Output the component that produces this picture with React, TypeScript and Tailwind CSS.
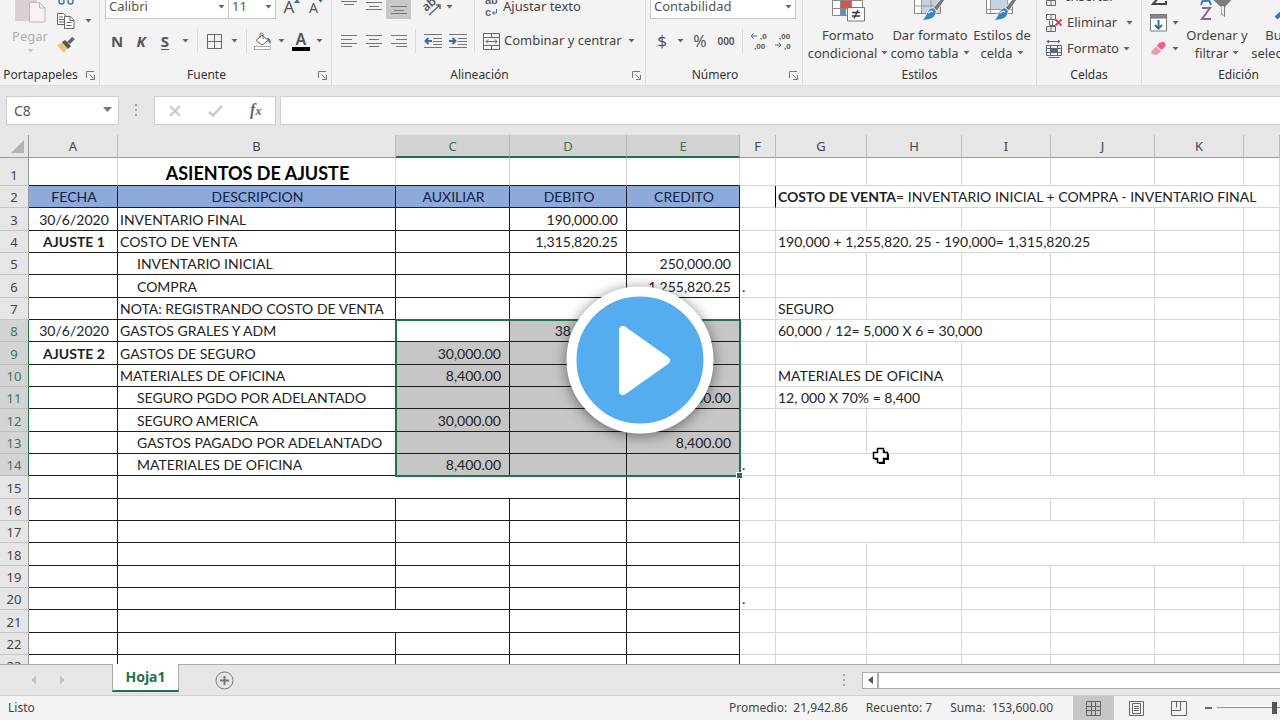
import type { ReactNode } from 'react';
import clsx from 'clsx';

type Cell = {
  text?: ReactNode;
  span?: number;
  className?: string;
};

const COLUMNS = [
  { id: 'A', width: 'w-[89px]' },
  { id: 'B', width: 'w-[278px]' },
  { id: 'C', width: 'w-[114px]' },
  { id: 'D', width: 'w-[117px]' },
  { id: 'E', width: 'w-[113px]' },
  { id: 'F', width: 'w-[36px]' },
  { id: 'G', width: 'w-[91px]' },
  { id: 'H', width: 'w-[95px]' },
  { id: 'I', width: 'w-[89px]' },
  { id: 'J', width: 'w-[104px]' },
  { id: 'K', width: 'w-[89px]' },
  { id: 'L', width: '' },
];

const ROWS = Array.from({ length: 23 }, (_, i) => i + 1);

const heading = 'text-center bg-[#8ea9db] text-[#14213f]';
const amount = 'text-right pr-2';
const indent = 'pl-[19px]';

const CELLS: Record<string, Cell> = {
  B1: { text: 'ASIENTOS DE AJUSTE', className: 'text-center font-bold text-lg leading-6 text-black' },
  A2: { text: 'FECHA', className: heading },
  B2: { text: 'DESCRIPCION', className: heading },
  C2: { text: 'AUXILIAR', className: heading },
  D2: { text: 'DEBITO', className: heading },
  E2: { text: 'CREDITO', className: heading },
  F2: { className: 'border-r-black' },
  G2: { text: <><b>COSTO DE VENTA</b>= INVENTARIO INICIAL + COMPRA - INVENTARIO FINAL</>, span: 6 },
  A3: { text: '30/6/2020', className: 'text-center' },
  B3: { text: 'INVENTARIO FINAL' },
  D3: { text: '190,000.00', className: amount },
  A4: { text: 'AJUSTE 1', className: 'text-center font-bold' },
  B4: { text: 'COSTO DE VENTA' },
  D4: { text: '1,315,820.25', className: amount },
  G4: { text: '190,000 + 1,255,820. 25 - 190,000= 1,315,820.25', span: 4 },
  B5: { text: 'INVENTARIO INICIAL', className: indent },
  E5: { text: '250,000.00', className: amount },
  B6: { text: 'COMPRA', className: indent },
  E6: { text: '1,255,820.25', className: amount },
  F6: { text: '.' },
  B7: { text: 'NOTA: REGISTRANDO COSTO DE VENTA' },
  G7: { text: 'SEGURO' },
  A8: { text: '30/6/2020', className: 'text-center' },
  B8: { text: 'GASTOS GRALES Y ADM' },
  D8: { text: '38,400.00', className: amount },
  G8: { text: '60,000 / 12= 5,000 X 6 = 30,000', span: 3 },
  A9: { text: 'AJUSTE 2', className: 'text-center font-bold' },
  B9: { text: 'GASTOS DE SEGURO' },
  C9: { text: '30,000.00', className: amount },
  B10: { text: 'MATERIALES DE OFICINA' },
  C10: { text: '8,400.00', className: amount },
  G10: { text: 'MATERIALES DE OFICINA', span: 2 },
  B11: { text: 'SEGURO PGDO POR ADELANTADO', className: indent },
  E11: { text: '30,000.00', className: amount },
  G11: { text: '12, 000 X 70% = 8,400', span: 2 },
  B12: { text: 'SEGURO AMERICA', className: indent },
  C12: { text: '30,000.00', className: amount },
  B13: { text: 'GASTOS PAGADO POR ADELANTADO', className: indent },
  E13: { text: '8,400.00', className: amount },
  B14: { text: 'MATERIALES DE OFICINA', className: indent },
  C14: { text: '8,400.00', className: amount },
  F14: { text: '.' },
  G14: { span: 2 },
  B15: { span: 3 },
  G15: { span: 2 },
  I15: { span: 4 },
  G16: { span: 2 },
  G17: { span: 2 },
  I17: { span: 2 },
  I18: { span: 4 },
  F20: { text: '.' },
  B21: { span: 2 },
};

const isSelectedColumn = (id: string) => 'CDE'.includes(id);
const isSelectedRow = (row: number) => row >= 8 && row <= 14;

/* ---------- small ribbon pieces ---------- */

function Caret({ className = 'text-[#666]' }: { className?: string }) {
  return (
    <svg width="7" height="4" viewBox="0 0 7 4" className={clsx('shrink-0', className)} fill="currentColor">
      <path d="M0.5 0h6L3.5 3.6z" />
    </svg>
  );
}

function CaretButton({ label, className = 'w-4' }: { label: string; className?: string }) {
  return (
    <button aria-label={label} className={clsx('flex h-6 shrink-0 items-center justify-center', className)}>
      <Caret />
    </button>
  );
}

function IconButton({ label, className = 'w-6', children }: { label: string; className?: string; children: ReactNode }) {
  return (
    <button aria-label={label} className={clsx('flex h-6 shrink-0 items-center justify-center text-[#555]', className)}>
      {children}
    </button>
  );
}

function Divider() {
  return <div className="mx-1 h-6 w-px shrink-0 bg-[#dadada]" />;
}

function Group({ label, launcher, className, children }: { label: string; launcher?: boolean; className: string; children: ReactNode }) {
  return (
    <section className={clsx('flex h-full shrink-0 flex-col justify-end border-r border-[#dadada]', className)}>
      {children}
      <div className="flex h-5 shrink-0 items-center">
        <span className="flex-1 text-center text-xs text-[#333]">{label}</span>
        {launcher && (
          <button aria-label={`Más opciones de ${label}`} className="flex w-[18px] items-center justify-center">
            <svg width="9" height="9" viewBox="0 0 9 9" fill="none" stroke="#777">
              <path d="M0.5 7V0.5H8" />
              <path d="M3.5 3.5L7.5 7.5M8.5 4v4.5H4" />
            </svg>
          </button>
        )}
      </div>
    </section>
  );
}

function BigButton({ icon, lines, className }: { icon: ReactNode; lines: [string, string]; className: string }) {
  return (
    <button className={clsx('flex shrink-0 flex-col items-center whitespace-nowrap leading-[18px] text-[#444]', className)}>
      <span className="mb-1">{icon}</span>
      <span>{lines[0]}</span>
      <span className="flex items-center gap-1">
        {lines[1]}
        <Caret />
      </span>
    </button>
  );
}

function Combo({ label, value, className }: { label: string; value: string; className: string }) {
  return (
    <div className={clsx('relative h-6 shrink-0', className)}>
      <select
        aria-label={label}
        defaultValue={value}
        className="h-full w-full appearance-none border border-[#c6c6c6] bg-white pl-[3px] text-[13px] text-[#555]"
      >
        <option>{value}</option>
      </select>
      <span className="pointer-events-none absolute right-1 top-1/2 -translate-y-1/2">
        <Caret />
      </span>
    </div>
  );
}

function Lines({ d }: { d: string }) {
  return (
    <svg width="16" height="14" viewBox="0 0 16 14" fill="none" stroke="#777">
      <path d={d} />
    </svg>
  );
}

const ALIGN_LEFT = 'M0 1.5h16M0 5.5h11M0 9.5h16M0 12.5h11';
const ALIGN_CENTER = 'M0 1.5h16M3 5.5h10M0 9.5h16M3 12.5h10';
const ALIGN_RIGHT = 'M0 1.5h16M5 5.5h11M0 9.5h16M5 12.5h11';

function IndentIcon({ arrow }: { arrow: string }) {
  return (
    <svg width="18" height="16" viewBox="0 0 18 16" fill="none" stroke="#777">
      <path d="M0 1.5h18M9 5.5h9M9 8.5h9M9 11.5h9M0 14.5h18" />
      <path d={arrow} stroke="#3b6ea5" strokeWidth="2" />
    </svg>
  );
}

function StyleBrushIcon({ grid }: { grid?: boolean }) {
  return (
    <svg width="34" height="32" viewBox="0 0 34 32" fill="none">
      <path d="M1.5 1.5h26v22h-26z" fill="#fff" stroke="#888" />
      <path d={grid ? 'M8 8h19v15H8z' : 'M6 6h16v13H6z'} fill="#c3d3e0" />
      <path d={grid ? 'M1.5 8.5h26M1.5 16h26M8.5 1.5v22M18 1.5v22' : 'M1.5 19.5h26M5.5 1.5v22M22.5 1.5v22'} stroke="#999" />
      <path d="M31 5l2.5 2.5L24 21l-4-3z" fill="#777" stroke="#f3f3f3" />
      <path d="M18 18c3-1 6 2 5 5-1 5-7 8-14 7 4-2 4-9 9-12z" fill="#3f80bd" stroke="#f3f3f3" />
      <path d="M15 23c2-2 4-2 5-1" stroke="#cfe3f4" strokeWidth="1.5" />
    </svg>
  );
}

function Ribbon() {
  return (
    <header className="flex h-[86px] shrink-0 overflow-hidden border-b border-[#dcdcdc] bg-[#f3f3f3] text-[13px]">
      <Group label="Portapapeles" launcher className="w-[100px]">
        <div className="mb-2 flex items-end">
          <button className="flex w-[60px] flex-col items-center text-[#b5adb1]">
            <svg width="32" height="34" viewBox="0 0 32 34" fill="none">
              <path d="M1 2h22v30H1z" fill="#dccfd3" />
              <path d="M15.5 13.5h10l5.5 5.5v14h-15.5z" fill="#f8f2f5" stroke="#c2b6bc" />
              <path d="M25.5 13.5v5.5h5.5" stroke="#c2b6bc" />
            </svg>
            <span className="mt-1 leading-[18px]">Pegar</span>
            <Caret className="my-1 text-[#c8c8c8]" />
          </button>
          <div className="flex flex-col">
            <IconButton label="Cortar" className="w-3">
              <svg width="18" height="18" viewBox="0 0 18 18" fill="none" stroke="#55779a" strokeWidth="1.5" className="shrink-0">
                <path d="M5 0l6 11M13 0L7 11" stroke="#777" />
                <circle cx="4.5" cy="13.5" r="2.5" />
                <circle cx="13.5" cy="13.5" r="2.5" />
              </svg>
            </IconButton>
            <div className="flex">
              <IconButton label="Copiar" className="w-3">
                <svg width="18" height="16" viewBox="0 0 18 16" fill="#fff" stroke="#666" className="shrink-0">
                  <path d="M0.5 0.5h6l3 3v8h-9z" />
                  <path d="M2 4h4M2 6.5h5M2 9h5" />
                  <path d="M7.5 3.5h6l3.5 3.5v8.5h-9.5z" />
                  <path d="M13 3.5v4h4M9.5 9.5h5M9.5 12.5h5" />
                </svg>
              </IconButton>
              <CaretButton label="Opciones de copiar" className="ml-2 w-4" />
            </div>
            <IconButton label="Copiar formato" className="w-3">
              <svg width="18" height="16" viewBox="0 0 18 16" className="shrink-0">
                <path d="M0 8l6-3 5 5-4 6z" fill="#ecc27f" />
                <path d="M5 5l3-2 6 6-3 3z" fill="#555" />
                <path d="M10 5l5-5 3 2-5 5z" fill="#666" />
              </svg>
            </IconButton>
          </div>
        </div>
      </Group>

      <Group label="Fuente" launcher className="w-[232px]">
        <div className="mb-3 flex flex-col gap-[10px] pl-[5px]">
          <div className="flex">
            <Combo label="Fuente" value="Calibri" className="w-[124px]" />
            <Combo label="Tamaño de fuente" value="11" className="-ml-px w-12" />
            <IconButton label="Aumentar tamaño" className="ml-1 w-6">
              <span className="text-[17px]">A</span>
              <svg width="6" height="4" viewBox="0 0 6 4" className="mb-3" fill="#3b6ea5"><path d="M0 4l3-4 3 4z" /></svg>
            </IconButton>
            <IconButton label="Disminuir tamaño" className="w-6">
              <span className="text-[14px]">A</span>
              <svg width="5" height="4" viewBox="0 0 6 4" className="mb-3" fill="#3b6ea5"><path d="M0 0h6L3 4z" /></svg>
            </IconButton>
          </div>
          <div className="flex text-[15px]">
            <IconButton label="Negrita"><b>N</b></IconButton>
            <IconButton label="Cursiva"><b className="italic">K</b></IconButton>
            <IconButton label="Subrayado"><b className="underline underline-offset-2">S</b></IconButton>
            <CaretButton label="Opciones de subrayado" />
            <Divider />
            <IconButton label="Bordes">
              <svg width="15" height="15" viewBox="0 0 15 15" fill="none" stroke="#666">
                <path d="M0.5 0.5h14v14h-14zM7.5 0.5v14M0.5 7.5h14" />
              </svg>
            </IconButton>
            <CaretButton label="Opciones de bordes" />
            <Divider />
            <IconButton label="Color de relleno">
              <svg width="20" height="18" viewBox="0 0 20 18" fill="none" stroke="#666">
                <path d="M3 8.5l6-5.5 6 5.5-6 4.500z" fill="#fff" />
                <path d="M7 6V2.5a1.5 1.5 0 0 1 3 0V7" />
                <path d="M14 6c3 0 4 2 3.5 6-1.5-1-2-3-2.5-4z" fill="#3b6ea5" stroke="none" />
                <path d="M1.5 14.5h16v3h-16z" fill="#fff" stroke="#aaa" />
              </svg>
            </IconButton>
            <CaretButton label="Opciones de relleno" className="w-3" />
            <IconButton label="Color de fuente" className="w-7">
              <span className="flex w-[18px] justify-center border-b-4 border-black text-base font-semibold leading-4">A</span>
            </IconButton>
            <CaretButton label="Opciones de color de fuente" className="w-2" />
          </div>
        </div>
      </Group>

      <Group label="Alineación" launcher className="w-[314px]">
        <div className="mb-3 flex pl-1">
          <div className="flex flex-col gap-[10px]">
            <div className="flex">
              <IconButton label="Alinear arriba" className="w-[25px]"><Lines d="M0 1.5h16M3 4.5h10" /></IconButton>
              <IconButton label="Alinear al medio" className="w-[25px]"><Lines d="M0 2.5h16M3 6.5h10M0 9.5h16" /></IconButton>
              <IconButton label="Alinear abajo" className="w-[25px] bg-[#c8c8c8]"><Lines d="M0 6.5h16M3 10.5h10M0 13.5h16" /></IconButton>
              <div className="w-[9px]" />
              <IconButton label="Orientación" className="w-[25px]">
                <svg width="20" height="20" viewBox="0 0 20 20" fill="none" stroke="#666">
                  <text x="0" y="11" fontSize="12" fontWeight="600" fill="#555" stroke="none" transform="rotate(-40 7 9)">ab</text>
                  <path d="M6 18L17 8M17 12V8h-4" strokeWidth="1.5" />
                </svg>
              </IconButton>
              <CaretButton label="Opciones de orientación" className="w-2" />
            </div>
            <div className="flex">
              <IconButton label="Alinear a la izquierda" className="w-[25px]"><Lines d={ALIGN_LEFT} /></IconButton>
              <IconButton label="Centrar" className="w-[25px]"><Lines d={ALIGN_CENTER} /></IconButton>
              <IconButton label="Alinear a la derecha" className="w-[25px]"><Lines d={ALIGN_RIGHT} /></IconButton>
              <Divider />
              <IconButton label="Disminuir sangría" className="w-[25px]"><IndentIcon arrow="M1 8h7M4.5 5L1.5 8l3 3" /></IconButton>
              <IconButton label="Aumentar sangría" className="w-[25px]"><IndentIcon arrow="M0 8h7M3.5 5l3 3-3 3" /></IconButton>
            </div>
          </div>
          <div className="mx-1 w-px bg-[#dadada]" />
          <div className="flex flex-col gap-[10px] pl-1">
            <button className="flex h-6 items-center gap-1 text-[#444]">
              <svg width="16" height="20" viewBox="0 0 16 20" className="font-['Liberation_Sans',sans-serif] text-[11px]" fill="none" stroke="#3b6ea5">
                <text x="2" y="7" fontWeight="700" fill="#666" stroke="none">ab</text>
                <text x="2" y="19" fontWeight="700" fill="#666" stroke="none">c</text>
                <path d="M13.5 12v4H9.5M11.5 14l-2 2 2 2" />
              </svg>
              Ajustar texto
            </button>
            <button className="flex h-6 items-center gap-1 whitespace-nowrap text-[#444]">
              <svg width="17" height="17" viewBox="0 0 17 17" fill="none" stroke="#666" className="shrink-0">
                <path d="M0.5 0.5h16v16h-16zM0.5 4.5h16M0.5 12.5h16M8.5 0.5v4M8.5 12.5v4" />
                <path d="M3 8.5h11M5 6.5l-2 2 2 2M12 6.5l2 2-2 2" stroke="#3b6ea5" />
              </svg>
              Combinar y centrar
              <span className="ml-0.5"><Caret /></span>
            </button>
          </div>
        </div>
      </Group>

      <Group label="Número" launcher className="w-[157px]">
        <div className="mb-3 flex flex-col gap-[10px] pl-1">
          <Combo label="Formato de número" value="Contabilidad" className="w-[146px]" />
          <div className="flex">
            <IconButton label="Formato de moneda"><span className="text-[17px]">$</span></IconButton>
            <CaretButton label="Opciones de moneda" className="w-3" />
            <IconButton label="Porcentaje" className="w-7"><span className="text-base">%</span></IconButton>
            <IconButton label="Millares" className="w-6"><span className="text-[10px] font-semibold">000</span></IconButton>
            <Divider />
            <IconButton label="Aumentar decimales" className="w-6">
              <svg width="18" height="18" viewBox="0 0 18 18" className="font-['Liberation_Sans',sans-serif] text-[8px] font-bold" fill="#555">
                <text x="10" y="7">,0</text>
                <text x="4" y="17">,00</text>
                <path d="M1 4h6M3.5 1.5L1 4l2.5 2.500" fill="none" stroke="#3b6ea5" />
              </svg>
            </IconButton>
            <IconButton label="Disminuir decimales" className="w-6">
              <svg width="18" height="18" viewBox="0 0 18 18" className="font-['Liberation_Sans',sans-serif] text-[8px] font-bold" fill="#555">
                <text x="5" y="7">,00</text>
                <text x="10" y="17">,0</text>
                <path d="M1 13h6M4.5 10.5L7 13l-2.5 2.500" fill="none" stroke="#3b6ea5" />
              </svg>
            </IconButton>
          </div>
        </div>
      </Group>

      <Group label="Estilos" className="w-[234px]">
        <div className="mb-[3px] flex items-end pl-[3px]">
          <BigButton
            className="w-[84px]"
            lines={['Formato', 'condicional']}
            icon={
              <svg width="34" height="32" viewBox="0 0 34 32" fill="none">
                <path d="M1.5 0.5h30v25h-30z" fill="#fff" stroke="#888" />
                <path d="M10 0h8v10h-8z" fill="#5b8fc4" />
                <path d="M10 11h10v7H10z" fill="#d9534a" />
                <path d="M10 19h5v6h-5z" fill="#5b8fc4" />
                <path d="M1.5 10.5h30M1.5 18.5h30M9.5 0.5v25M20.5 0.5v25" stroke="#888" />
                <path d="M16.5 17.5h17v13.5h-17z" fill="#fff" stroke="#777" />
                <path d="M21 22.5h8M21 26h8M27 20l-4 8.5" stroke="#333" strokeWidth="1.3" />
              </svg>
            }
          />
          <BigButton className="w-20" lines={['Dar formato', 'como tabla']} icon={<StyleBrushIcon grid />} />
          <BigButton className="w-16" lines={['Estilos de', 'celda']} icon={<StyleBrushIcon />} />
        </div>
      </Group>

      <Group label="Celdas" className="w-[105px]">
        <div className="mb-[3px] flex flex-col pl-2 text-[#444]">
          <button className="flex h-[26px] items-center gap-1">
            <svg width="17" height="17" viewBox="0 0 17 17" fill="none" stroke="#666">
              <path d="M1.5 0.5h9v5h-9zM6 0.5v5M1.5 11.5h9v5h-9zM6 11.5v5" />
            </svg>
            Insertar
            <span className="ml-auto mr-2"><Caret /></span>
          </button>
          <button className="flex h-[26px] items-center gap-1">
            <svg width="18" height="18" viewBox="0 0 18 18" fill="none" stroke="#666">
              <path d="M1.5 0.5h9v5h-9zM6 0.5v5M1.5 12.5h9v5h-9zM6 12.5v5M4.5 6.5v5h6M7.5 6.5v5" />
              <path d="M10.5 5.5l6 6M16.5 5.5l-6 6" stroke="#d9415c" strokeWidth="2" />
            </svg>
            Eliminar
            <span className="ml-auto mr-2"><Caret /></span>
          </button>
          <button className="flex h-[26px] items-center gap-1">
            <svg width="18" height="18" viewBox="0 0 18 18" fill="none" stroke="#666">
              <path d="M2 1.5h13M4 0L2 1.5 4 3M13 0l2 1.5L13 3" stroke="#3b6ea5" />
              <path d="M1.5 5.5h15v10h-15zM5.5 5.5v10M12.5 5.5v10M1.5 8.5h15M1.5 12.5h15M3.5 17.5h11" />
              <path d="M6 9h6v3H6z" fill="#3b6ea5" stroke="none" />
            </svg>
            Formato
            <Caret />
          </button>
        </div>
      </Group>

      <Group label="Edición" className="w-[194px]">
        <div className="mb-[3px] flex items-end pl-2">
          <div className="flex w-[38px] flex-col">
            <button aria-label="Autosuma" className="flex h-[26px] items-center">
              <svg width="18" height="18" viewBox="0 0 18 18" fill="none" stroke="#444" strokeWidth="2">
                <path d="M16 4V2H3l6 7-6 7h13v-3" />
              </svg>
            </button>
            <button aria-label="Rellenar" className="flex h-[26px] items-center justify-between">
              <svg width="17" height="18" viewBox="0 0 17 18" fill="#fff" stroke="#777">
                <path d="M0.5 0.5h16v16.5h-16z" />
                <path d="M0.5 0.5h16v3.5h-16z" fill="#888" />
                <path d="M8.5 6v8M5 11l3.5 3.5L12 11" fill="none" stroke="#3b6ea5" strokeWidth="2" />
              </svg>
              <span className="mr-2"><Caret /></span>
            </button>
            <button aria-label="Borrar" className="flex h-[26px] items-center justify-between">
              <svg width="17" height="16" viewBox="0 0 17 16">
                <path d="M9 2l5-1.5 2 4L12 9 7 5z" fill="#e8647c" />
                <path d="M6 5.5l5 4.5-4 4-5.5-1v-3z" fill="#f09aaa" />
              </svg>
              <span className="mr-2"><Caret /></span>
            </button>
          </div>
          <BigButton
            className="w-[60px]"
            lines={['Ordenar y', 'filtrar']}
            icon={
              <svg width="34" height="32" viewBox="0 0 34 32" fill="none">
                <path d="M1 15L6 2l5 13M3 11h6" stroke="#3f80bd" strokeWidth="2" />
                <path d="M2 18h8L2 29h9" stroke="#8a62ad" strokeWidth="2" />
                <path d="M11 8h22l-8 9v10l-4-3v-7z" fill="#7b7b7b" />
                <path d="M21.5 16v7l2.5 3v-10z" fill="#eee" />
              </svg>
            }
          />
          <BigButton
            className="w-[88px]"
            lines={['Buscar y', 'seleccionar']}
            icon={
              <svg width="34" height="32" viewBox="0 0 34 32" fill="none" stroke="#3f6fc0">
                <circle cx="20" cy="11" r="9" strokeWidth="2" />
                <path d="M13 18L2 28" strokeWidth="4" />
              </svg>
            }
          />
        </div>
      </Group>
    </header>
  );
}

function Dots() {
  return (
    <svg width="3" height="13" viewBox="0 0 3 13" fill="#a6a6a6" className="shrink-0">
      <path d="M0 0h2v2H0zM0 5h2v2H0zM0 10h2v2H0z" />
    </svg>
  );
}

function FormulaBar() {
  return (
    <div className="flex shrink-0 items-center bg-[#e6e6e6] py-[10px] pl-1.5">
      <div className="relative h-[29px] w-[113px] shrink-0">
        <input aria-label="Cuadro de nombres" defaultValue="C8" className="h-full w-full border border-[#cfcfcf] bg-white pl-[7px] text-sm text-[#555]" />
        <svg width="9" height="5" viewBox="0 0 9 5" className="absolute right-[7px] top-[11px]" fill="#777">
          <path d="M0 0h9L4.5 5z" />
        </svg>
      </div>
      <div className="mx-4"><Dots /></div>
      <div className="flex h-[29px] w-[122px] shrink-0 items-center justify-around border border-[#cfcfcf] bg-white">
        <button aria-label="Cancelar">
          <svg width="12" height="12" viewBox="0 0 12 12" stroke="#c8c8c8" strokeWidth="2"><path d="M1 1l10 10M11 1L1 11" /></svg>
        </button>
        <button aria-label="Introducir">
          <svg width="15" height="12" viewBox="0 0 15 12" fill="none" stroke="#c8c8c8" strokeWidth="2.5"><path d="M1 7l4 3.5L14 1" /></svg>
        </button>
        <button aria-label="Insertar función" className="font-['Liberation_Serif',serif] text-base font-bold italic leading-none text-[#666]">
          f<span className="text-xs">x</span>
        </button>
      </div>
      <input aria-label="Barra de fórmulas" className="ml-1 h-[29px] min-w-0 flex-1 border border-r-0 border-[#cfcfcf] bg-white px-2" />
    </div>
  );
}

function SheetRow({ row }: { row: number }) {
  const selectedRow = isSelectedRow(row);
  const cells: ReactNode[] = [];

  for (let i = 0; i < COLUMNS.length; ) {
    const { id } = COLUMNS[i];
    const cell = CELLS[`${id}${row}`] ?? {};
    const inLedger = i < 5;
    const selected = selectedRow && isSelectedColumn(id) && !(id === 'C' && row === 8);
    cells.push(
      <td
        key={id}
        colSpan={cell.span}
        className={clsx(
          'whitespace-nowrap border-b border-r p-0 align-bottom',
          !cell.className?.includes('pl-') && 'pl-[2px]',
          inLedger ? 'border-b-[#1c1c1c]' : 'border-b-[#d6d6d6]',
          !cell.className?.includes('border-r') && (inLedger && row > 1 ? 'border-r-[#1c1c1c]' : 'border-r-[#d6d6d6]'),
          selected && 'bg-[#c6c6c6]',
          cell.className,
        )}
      >
        {cell.text}
      </td>,
    );
    i += cell.span ?? 1;
  }

  return (
    <tr className={row === 1 ? 'h-7' : row % 3 === 0 ? 'h-[23px]' : 'h-[22px]'}>
      <th
        scope="row"
        className={clsx(
          "border-b border-r p-0 align-bottom font-['Noto_Sans',sans-serif] text-[13px] leading-5 font-normal",
          selectedRow ? 'border-b-[#bdbdbd] border-r-[#217346] bg-[#d4d4d4] text-[#3d7558]' : 'border-b-[#c6c6c6] border-r-[#9a9a9a] bg-[#e6e6e6] text-[#444]',
        )}
      >
        {row}
      </th>
      {cells}
    </tr>
  );
}

function Sheet() {
  return (
    <main className="relative min-h-0 flex-1 overflow-hidden bg-white">
      <table className="w-full table-fixed border-separate border-spacing-0 font-['Lato','Liberation_Sans',sans-serif] text-sm leading-5 text-[#222]">
        <colgroup>
          <col className="w-[29px]" />
          {COLUMNS.map((column) => (
            <col key={column.id} className={column.width} />
          ))}
        </colgroup>
        <thead>
          <tr className="h-[23px] font-['Noto_Sans',sans-serif] text-[13px]">
            <th aria-label="Seleccionar todo" className="border-b border-r border-[#9a9a9a] bg-[#e6e6e6] p-0">
              <svg width="13" height="13" viewBox="0 0 13 13" className="ml-auto mr-1" fill="#b4b4b4"><path d="M13 0v13H0z" /></svg>
            </th>
            {COLUMNS.map(({ id }) => (
              <th
                key={id}
                scope="col"
                className={clsx(
                  'border-r p-0 font-normal',
                  isSelectedColumn(id)
                    ? 'border-b-2 border-b-[#217346] border-r-[#b4b4b4] bg-[#d2d2d2] text-[#3d7558]'
                    : 'border-b border-b-[#9a9a9a] border-r-[#bdbdbd] bg-[#e6e6e6] text-[#444]',
                )}
              >
                {id === 'L' ? null : id}
              </th>
            ))}
          </tr>
        </thead>
        <tbody>
          {ROWS.map((row) => (
            <SheetRow key={row} row={row} />
          ))}
        </tbody>
      </table>

      {/* Selected range C8:E14 */}
      <div className="pointer-events-none absolute left-[395px] top-[184px] h-[158px] w-[346px] border-2 border-[#217346]">
        <div className="absolute -bottom-1 -right-1 size-[7px] border border-white bg-[#217346]" />
      </div>

      {/* Mouse pointer */}
      <svg width="18" height="18" viewBox="0 0 18 18" className="pointer-events-none absolute left-[872px] top-[312px]">
        <path d="M7 3h6v4h4v6h-4v4H7v-4H3V7h4z" fill="#000" />
        <path d="M5.5 1.5h6v4h4v6h-4v4h-6v-4h-4v-6h4z" fill="#fff" stroke="#000" strokeWidth="1.5" />
      </svg>
    </main>
  );
}

function SheetTabs() {
  return (
    <nav className="flex h-8 shrink-0 items-start border-b border-t border-b-[#d0d0d0] border-t-[#ababab] bg-[#e6e6e6]">
      <div className="flex h-full w-28 shrink-0 items-center gap-6 pl-[30px]">
        <button aria-label="Hoja anterior">
          <svg width="6" height="8" viewBox="0 0 6 8" fill="#c2c2c2"><path d="M6 0v8L1 4z" /></svg>
        </button>
        <button aria-label="Hoja siguiente">
          <svg width="6" height="8" viewBox="0 0 6 8" fill="#c2c2c2"><path d="M0 0v8l5-4z" /></svg>
        </button>
      </div>
      <button className="-mt-px h-7 w-[67px] shrink-0 border-x border-b-2 border-x-[#ababab] border-b-[#217346] bg-white text-sm font-bold text-[#217346]">
        Hoja1
      </button>
      <button aria-label="Hoja nueva" className="ml-9 mt-1.5 shrink-0">
        <svg width="19" height="19" viewBox="0 0 19 19" fill="none" stroke="#777">
          <circle cx="9.5" cy="9.5" r="8.5" />
          <path d="M9.5 5v9M5 9.5h9" strokeWidth="2" />
        </svg>
      </button>
      <div className="ml-auto flex h-full w-[437px] shrink-0 items-center">
        <Dots />
        <div className="ml-4 flex h-[17px] flex-1 border border-r-0 border-[#ababab] bg-white">
          <button aria-label="Desplazar a la izquierda" className="flex w-4 items-center justify-center border-r-2 border-[#ababab]">
            <svg width="5" height="8" viewBox="0 0 5 8" fill="#555"><path d="M5 0v8L0 4z" /></svg>
          </button>
        </div>
      </div>
    </nav>
  );
}

function StatusBar() {
  return (
    <footer className="flex h-6 shrink-0 items-center bg-[#f3f3f3] pl-2 text-xs text-[#444]">
      <span>Listo</span>
      <div className="ml-auto flex items-center gap-[18px] whitespace-pre">
        <span>Promedio:  21,942.86</span>
        <span>Recuento: 7</span>
        <span>Suma:  153,600.00</span>
      </div>
      <div className="ml-5 flex h-full items-center">
        <button aria-label="Vista normal" className="flex h-full w-[41px] items-center justify-center bg-[#c6c6c6]">
          <svg width="15" height="15" viewBox="0 0 15 15" fill="none" stroke="#666">
            <path d="M0.5 0.5h14v14h-14zM5.5 0.5v14M9.5 0.5v14M0.5 5.5h14M0.5 9.5h14" />
          </svg>
        </button>
        <button aria-label="Diseño de página" className="flex h-full w-11 items-center justify-center">
          <svg width="15" height="15" viewBox="0 0 15 15" fill="none" stroke="#666">
            <path d="M0.5 0.5h14v14h-14zM3.5 2.5h8v10h-8zM5 5.5h5M5 7.5h5M5 9.5h5" />
          </svg>
        </button>
        <button aria-label="Vista previa de salto de página" className="flex h-full w-[41px] items-center justify-center">
          <svg width="16" height="15" viewBox="0 0 16 15" fill="none" stroke="#666">
            <path d="M0.5 0.5h15v14h-15zM0.5 9.5h9v-9M5.5 0.5v6" />
          </svg>
        </button>
        <button aria-label="Alejar" className="flex h-full w-[18px] items-center justify-center">
          <span className="h-[2px] w-[7px] bg-[#666]" />
        </button>
        <input
          type="range"
          aria-label="Zoom"
          defaultValue={95}
          className="h-3 w-[63px] appearance-none bg-linear-to-b from-transparent from-45% via-[#8a8a8a] via-45% to-transparent to-55% [&::-webkit-slider-thumb]:h-3 [&::-webkit-slider-thumb]:w-[5px] [&::-webkit-slider-thumb]:appearance-none [&::-webkit-slider-thumb]:bg-[#555]"
        />
      </div>
    </footer>
  );
}

export default function App() {
  return (
    <div className="relative flex h-screen flex-col overflow-hidden bg-[#e6e6e6] font-['Noto_Sans','Liberation_Sans',sans-serif]">
      <Ribbon />
      <FormulaBar />
      <Sheet />
      <SheetTabs />
      <StatusBar />

      <button
        aria-label="Reproducir"
        className="absolute left-1/2 top-1/2 flex size-[147px] -translate-x-1/2 -translate-y-1/2 items-center justify-center rounded-full border-10 border-white bg-[#55acee] shadow-[0_2px_14px_rgba(0,0,0,0.5)]"
      >
        <svg width="52" height="70" viewBox="0 0 52 70" className="ml-2" fill="#fff" stroke="#fff" strokeWidth="8" strokeLinejoin="round">
          <path d="M4.5 4.5v61L47.5 35z" />
        </svg>
      </button>
    </div>
  );
}
